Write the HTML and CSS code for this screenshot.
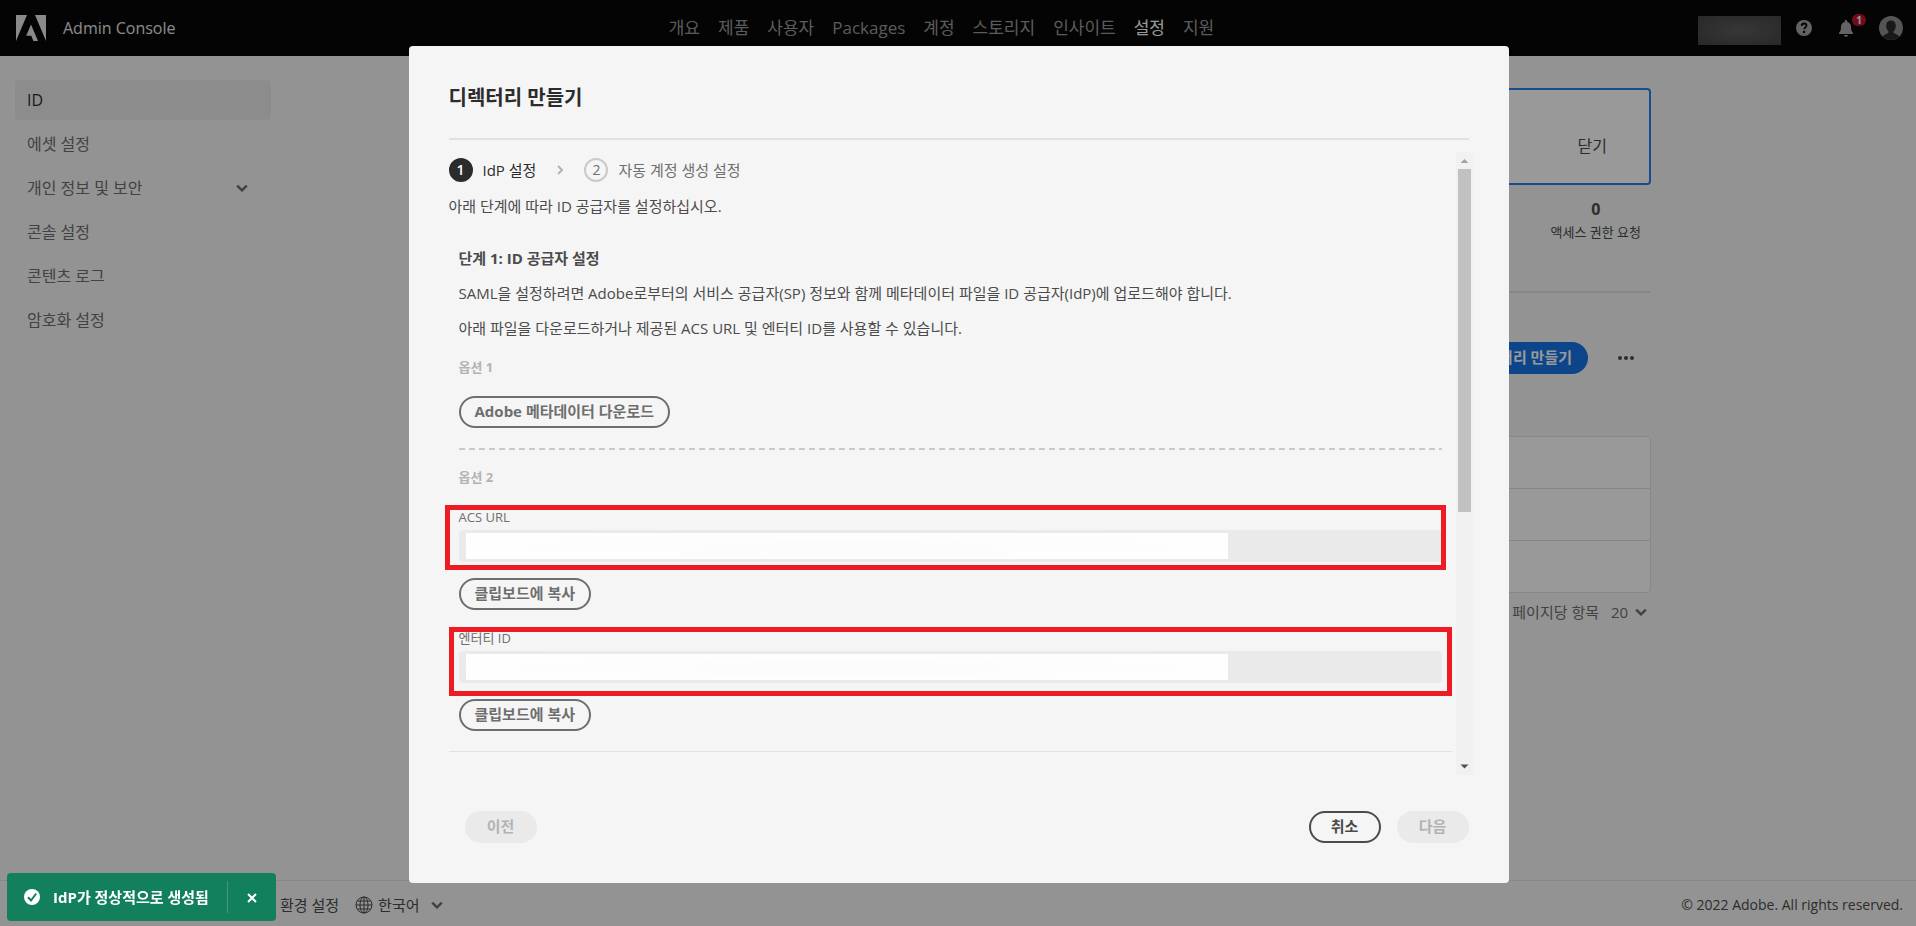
FILE: index.html
```html
<!DOCTYPE html>
<html lang="ko">
<head>
  <meta charset="UTF-8" />
  <meta name="viewport" content="width=device-width, initial-scale=1.0" />
  <title>Admin Console</title>
  <link rel="stylesheet" href="styles.css">
</head>
<body>

<div class="app">
  <header class="topbar">
    <a class="brand" href="#">
      <svg class="brand-logo" viewBox="0 0 30 26" aria-hidden="true">
        <path fill="currentColor" d="M0 0h11L0 26zM19 0h11v26zM15 9.5L22 26h-4.600l-2.100-5.300h-5.100z" />
      </svg>
      <span>Admin Console</span>
    </a>
    <nav class="topnav">
      <a href="#">개요</a>
      <a href="#">제품</a>
      <a href="#">사용자</a>
      <a href="#">Packages</a>
      <a href="#">계정</a>
      <a href="#">스토리지</a>
      <a href="#">인사이트</a>
      <a href="#" class="active">설정</a>
      <a href="#">지원</a>
    </nav>
    <div class="tools">
      <span class="org"></span>
      <button class="tool" aria-label="도움말">
        <svg width="16" height="16" viewBox="0 0 16 16">
          <circle cx="8" cy="8" r="8" fill="#a6a6a6" />
          <path d="M5.600 5.900C5.700 4.300 6.700 3.500 8.100 3.500c1.400 0 2.400.8 2.400 2 0 1.900-2.300 1.800-2.300 3.800" fill="none" stroke="#090909" stroke-width="1.800" />
          <circle cx="8.100" cy="12" r="1.200" fill="#090909" />
        </svg>
      </button>
      <button class="tool bell" aria-label="알림">
        <svg width="14" height="17" viewBox="0 0 14 17">
          <path fill="#a6a6a6" d="M7 0c.7 0 1.200.5 1.200 1.200v.7C10.500 2.400 12 4.200 12 6.500c0 3.500.5 5 2 6.500v1H0v-1c1.500-1.500 2-3 2-6.500 0-2.300 1.500-4.100 3.800-4.600v-.7C5.800.5 6.300 0 7 0zM5 15h4c-.2 1.200-1 1.800-2 1.800S5.200 16.200 5 15z" />
        </svg>
        <span class="badge">1</span>
      </button>
      <button class="tool" aria-label="프로필">
        <svg width="24" height="24" viewBox="0 0 24 24">
          <circle cx="12" cy="12" r="12" fill="#8e8e8e" />
          <path fill="#2a2a2a" d="M12 4.500c3 0 4.800 2.200 4.800 5.300 0 2.400-.9 4.400-2.200 5.500v1.500c0 .7 3.900 1.300 5.800 3.700a12 12 0 0 1-16.800 0c1.900-2.400 5.800-3 5.800-3.700v-1.500c-1.300-1.100-2.200-3.100-2.200-5.500 0-3.100 1.800-5.300 4.800-5.300z" />
        </svg>
      </button>
    </div>
  </header>

  <div class="content">
    <aside class="sidebar">
      <a href="#" class="active">ID</a>
      <a href="#">에셋 설정</a>
      <a href="#">개인 정보 및 보안
        <svg class="chevron" viewBox="0 0 10 6"><path d="M1 1l4 4 4-4" /></svg>
      </a>
      <a href="#">콘솔 설정</a>
      <a href="#">콘텐츠 로그</a>
      <a href="#">암호화 설정</a>
    </aside>

    <main class="page">
      <div class="notice"><button>닫기</button></div>
      <div class="stats">
        <div class="stat"><strong>0</strong><span>액세스 권한 요청</span></div>
      </div>
      <div class="toolbar">
        <button class="btn btn-primary">디렉터리 만들기</button>
        <button class="more" aria-label="더 보기">
          <svg width="16" height="4" viewBox="0 0 16 4"><circle cx="2" cy="2" r="2" /><circle cx="8" cy="2" r="2" /><circle cx="14" cy="2" r="2" /></svg>
        </button>
      </div>
      <div class="rows"><div></div><div></div><div></div></div>
      <div class="pager">
        <label for="pageSize">페이지당 항목</label>
        <select id="pageSize"><option>20</option></select>
        <svg class="chevron" viewBox="0 0 10 6"><path d="M1 1l4 4 4-4" /></svg>
      </div>
    </main>
  </div>

  <footer class="footer">
    <a href="#">환경 설정</a>
    <svg class="globe" viewBox="0 0 18 18" aria-hidden="true">
      <circle cx="9" cy="9" r="8" /><ellipse cx="9" cy="9" rx="4" ry="8" />
      <path d="M9 1v16M1 9h16M2.500 5h13M2.500 13h13" />
    </svg>
    <select id="language" aria-label="언어"><option>한국어</option></select>
    <svg class="chevron" viewBox="0 0 10 6"><path d="M1 1l4 4 4-4" /></svg>
    <span class="copyright">© 2022 Adobe. All rights reserved.</span>
  </footer>
</div>

<div class="overlay">
  <section class="dialog" role="dialog" aria-labelledby="dialogTitle">
    <h1 id="dialogTitle">디렉터리 만들기</h1>

    <div class="scroller">
      <div class="scroll-content">
        <ol class="steps">
          <li class="current"><span class="num">1</span>IdP 설정</li>
          <li class="arrow"><svg viewBox="0 0 6 10"><path d="M1 1l4 4-4 4" /></svg></li>
          <li><span class="num">2</span>자동 계정 생성 설정</li>
        </ol>
        <p class="intro">아래 단계에 따라 ID 공급자를 설정하십시오.</p>

        <div class="step-body">
          <h2>단계 1: ID 공급자 설정</h2>
          <p>SAML을 설정하려면 Adobe로부터의 서비스 공급자(SP) 정보와 함께 메타데이터 파일을 ID 공급자(IdP)에 업로드해야 합니다.</p>
          <p>아래 파일을 다운로드하거나 제공된 ACS URL 및 엔터티 ID를 사용할 수 있습니다.</p>

          <h3>옵션 1</h3>
          <button class="btn">Adobe 메타데이터 다운로드</button>
          <div class="dashes"></div>

          <h3>옵션 2</h3>
          <div class="field">
            <label for="acsUrl">ACS URL</label>
            <div class="input-wrap">
              <input type="text" id="acsUrl" readonly>
              <span class="masked"></span>
            </div>
            <span class="mark mark-acs"></span>
          </div>
          <button class="btn">클립보드에 복사</button>

          <div class="field">
            <label for="entityId">엔터티 ID</label>
            <div class="input-wrap">
              <input type="text" id="entityId" readonly>
              <span class="masked"></span>
            </div>
            <span class="mark mark-entity"></span>
          </div>
          <button class="btn">클립보드에 복사</button>
        </div>
      </div>

      <div class="scrollbar" aria-hidden="true">
        <svg viewBox="0 0 17 17"><path fill="#a3a3a3" d="M8.500 7l4 4h-8z" /></svg>
        <div class="thumb"></div>
        <svg viewBox="0 0 17 17"><path fill="#505050" d="M8.500 10.500l4-4h-8z" /></svg>
      </div>
    </div>

    <div class="actions">
      <button class="btn prev" disabled>이전</button>
      <button class="btn btn-dark">취소</button>
      <button class="btn" disabled>다음</button>
    </div>
  </section>
</div>

<div class="toast" role="status">
  <svg class="toast-icon" viewBox="0 0 16 16"><circle cx="8" cy="8" r="8" fill="#fff" /><path d="M4 8.300l3 3.200 5.200-7" fill="none" stroke="#12805c" stroke-width="2" /></svg>
  <span class="toast-text">IdP가 정상적으로 생성됨</span>
  <button class="toast-close" aria-label="닫기">
    <svg width="10" height="10" viewBox="0 0 10 10"><path d="M1 1l8 8M9 1L1 9" stroke="#fff" stroke-width="2" /></svg>
  </button>
</div>

</body>
</html>
```
FILE: styles.css
```css
* {
  box-sizing: border-box;
}

body {
  margin: 0;
  background: #f5f5f5;
  color: #4b4b4b;
  font-family: "Open Sans", "Noto Sans CJK KR", sans-serif;
  font-size: 15px;
  line-height: 20px;
}

a {
  color: inherit;
  text-decoration: none;
}

button,
select,
input {
  font: inherit;
  color: inherit;
}

button {
  padding: 0;
  border: none;
  background: none;
  cursor: pointer;
}

select {
  appearance: none;
  border: none;
  background: none;
  padding: 0;
}

.chevron {
  width: 12px;
  height: 8px;
  fill: none;
  stroke: #6e6e6e;
  stroke-width: 2;
}

.app {
  min-height: 100vh;
  display: flex;
  flex-direction: column;
}

/* top bar */
.topbar {
  display: grid;
  grid-template-columns: 1fr auto 1fr;
  align-items: center;
  height: 56px;
  padding: 0 13px 0 16px;
  background: #080808;
  color: #989898;
}

.brand {
  display: flex;
  align-items: center;
  gap: 17px;
  font-size: 16px;
  color: #e6e6e6;
}

.brand-logo {
  width: 30px;
  height: 26px;
}

.topnav {
  display: flex;
  gap: 18px;
  font-size: 17px;
  margin-right: 36px;
}

.topnav .active {
  color: #fff;
}

.tools {
  display: flex;
  justify-content: flex-end;
  align-items: center;
}

.org {
  width: 83px;
  height: 29px;
  margin: 4px 15px 0 0;
  background: radial-gradient(ellipse at center, #5c5c5c, #444);
}

.tool {
  display: flex;
}

.bell {
  position: relative;
  margin: 0 26px 0 27px;
}

.badge {
  position: absolute;
  left: 13px;
  top: -6px;
  width: 14px;
  height: 12px;
  border-radius: 6px;
  background: #c0152c;
  color: #fff;
  font-size: 10px;
  font-weight: 700;
  line-height: 12px;
}

/* page behind the dialog */
.content {
  flex: 1;
  display: flex;
}

.sidebar {
  width: 286px;
  padding: 24px 15px;
  display: flex;
  flex-direction: column;
  gap: 4px;
}

.sidebar a {
  display: flex;
  align-items: center;
  justify-content: space-between;
  height: 40px;
  padding: 0 23px 0 12px;
  border-radius: 4px;
  color: #6e6e6e;
  font-size: 16px;
}

.sidebar .active {
  background: #eaeaea;
  color: #2c2c2c;
}

.page {
  width: 100%;
  max-width: 1100px;
  margin: 0 auto;
  padding-top: 32px;
}

.notice {
  display: flex;
  justify-content: flex-end;
  align-items: center;
  height: 97px;
  padding: 18px 42px 0 0;
  border: 2px solid #2680eb;
  border-radius: 4px;
  background: #fff;
  font-size: 16px;
}

.stats {
  display: flex;
  justify-content: flex-end;
  height: 108px;
  padding: 13px 10px 0 0;
  border-bottom: 2px solid #e1e1e1;
}

.stat {
  display: flex;
  flex-direction: column;
  align-items: center;
  font-size: 13px;
}

.stat strong {
  margin-bottom: 2px;
  font-size: 16px;
  line-height: 22px;
}

.toolbar {
  display: flex;
  justify-content: flex-end;
  align-items: center;
  gap: 30px;
  margin: 49px 17px 62px 0;
}

.more {
  display: flex;
  fill: #4b4b4b;
}

.rows {
  border: 1px solid #e1e1e1;
  border-radius: 4px;
  background: #fff;
}

.rows div {
  height: 52px;
  border-bottom: 1px solid #e1e1e1;
}

.rows div:last-child {
  height: 51px;
  border-bottom: none;
}

.pager {
  display: flex;
  justify-content: flex-end;
  align-items: center;
  gap: 6px;
  padding: 9px 4px 0 0;
  color: #6e6e6e;
}

.pager label {
  margin-right: 6px;
}

.footer {
  display: flex;
  align-items: center;
  height: 46px;
  padding: 2px 13px 0 280px;
  border-top: 1px solid #e1e1e1;
}

.globe {
  width: 18px;
  height: 18px;
  margin: 0 5px 0 16px;
  fill: none;
  stroke: #4b4b4b;
}

.footer .chevron {
  margin-left: 11px;
}

.copyright {
  margin-left: auto;
  font-size: 14px;
}

/* buttons */
.btn {
  min-width: 72px;
  height: 32px;
  padding: 0 14px 2px;
  border: 2px solid #6e6e6e;
  border-radius: 16px;
  color: #6e6e6e;
  font-size: 15px;
  font-weight: 700;
  line-height: 24px;
}

.btn-primary {
  border-color: #1473e6;
  background: #1473e6;
  color: #fff;
}

.btn-dark {
  border-color: #4b4b4b;
  color: #4b4b4b;
}

.btn:disabled {
  border-color: #eaeaea;
  background: #eaeaea;
  color: #b3b3b3;
}

/* dialog */
.overlay {
  position: fixed;
  inset: 0;
  display: flex;
  justify-content: center;
  padding: 46px 0 43px 1px;
  background: rgba(0, 0, 0, 0.4);
}

.dialog {
  display: flex;
  flex-direction: column;
  width: 1100px;
  padding: 40px;
  border-radius: 4px;
  background: #f5f5f5;
}

.dialog h1 {
  margin: 0 0 12px;
  padding: 1px 0 29px;
  border-bottom: 2px solid #e1e1e1;
  color: #2c2c2c;
  font-size: 20px;
  line-height: 22px;
}

.scroller {
  flex: 1;
  min-height: 0;
  display: grid;
  grid-template-columns: 1fr 17px;
  gap: 4px;
  margin: 0 -4px;
}

/* left padding leaves room for the highlight frames */
.scroll-content {
  min-height: 0;
  overflow: hidden;
  padding: 6px 0 0 4px;
}

.scrollbar {
  display: flex;
  flex-direction: column;
  justify-content: space-between;
  background: #f1f1f1;
}

.thumb {
  height: 55%;
  margin: 0 2px auto;
  background: #c1c1c1;
}

.steps {
  display: flex;
  align-items: center;
  margin: 0;
  padding: 0;
  list-style: none;
  color: #6e6e6e;
}

.steps li {
  display: flex;
  align-items: center;
  gap: 10px;
}

.steps .current {
  color: #2c2c2c;
}

.num {
  width: 24px;
  height: 24px;
  border: 2px solid #cacaca;
  border-radius: 50%;
  font-size: 14px;
  line-height: 20px;
  text-align: center;
}

.current .num {
  border-color: #2c2c2c;
  background: #2c2c2c;
  color: #fff;
  font-weight: 600;
}

.arrow svg {
  width: 6px;
  height: 10px;
  margin: 0 21px;
  fill: none;
  stroke: #b3b3b3;
  stroke-width: 2;
}

.intro {
  margin: 14px 0 32px;
}

.step-body {
  padding: 0 10px 20px;
  border-bottom: 1px solid #e1e1e1;
}

.step-body h2 {
  margin: 0;
  font-size: 15px;
  line-height: 20px;
}

.step-body p {
  margin: 15px 0 0;
}

.step-body h3 {
  margin: 21px 0;
  color: #b3b3b3;
  font-size: 13px;
  line-height: 16px;
}

.step-body .btn {
  display: block;
}

.dashes {
  height: 2px;
  margin-top: 20px;
  background: repeating-linear-gradient(to right, #cacaca 0 6px, transparent 6px 10px);
}

.step-body .dashes + h3 {
  margin-top: 19px;
}

.field {
  position: relative;
  margin: 20px 0 16px;
}

h3 + .field {
  margin-top: 24px;
}

.field label {
  display: block;
  margin-bottom: 5px;
  color: #6e6e6e;
  font-size: 13px;
  line-height: 16px;
}

.input-wrap {
  position: relative;
}

.field input {
  display: block;
  width: 100%;
  height: 32px;
  border: none;
  border-radius: 4px;
  background: #eaeaea;
}

.masked {
  position: absolute;
  left: 7px;
  right: 214px;
  top: 3px;
  height: 26px;
  background: radial-gradient(ellipse at center, #fbfbfb, #fff);
}

.mark {
  position: absolute;
  border: 5px solid #ed1c24;
  pointer-events: none;
}

.mark-acs {
  inset: -4px -4px -8px -14px;
}

.mark-entity {
  inset: -3px -10px -13px;
}

.actions {
  display: flex;
  gap: 16px;
  margin-top: 36px;
}

.prev {
  margin: 0 auto 0 16px;
}

/* toast */
.toast {
  position: fixed;
  left: 7px;
  bottom: 5px;
  display: flex;
  align-items: center;
  height: 48px;
  padding-left: 17px;
  border-radius: 4px;
  background: #12805c;
  color: #fff;
  font-weight: 700;
}

.toast-icon {
  width: 16px;
  height: 16px;
}

.toast-text {
  margin: 0 18px 0 13px;
}

.toast-close {
  height: 32px;
  padding: 0 19px;
  border-left: 1px solid #419978;
}
```
